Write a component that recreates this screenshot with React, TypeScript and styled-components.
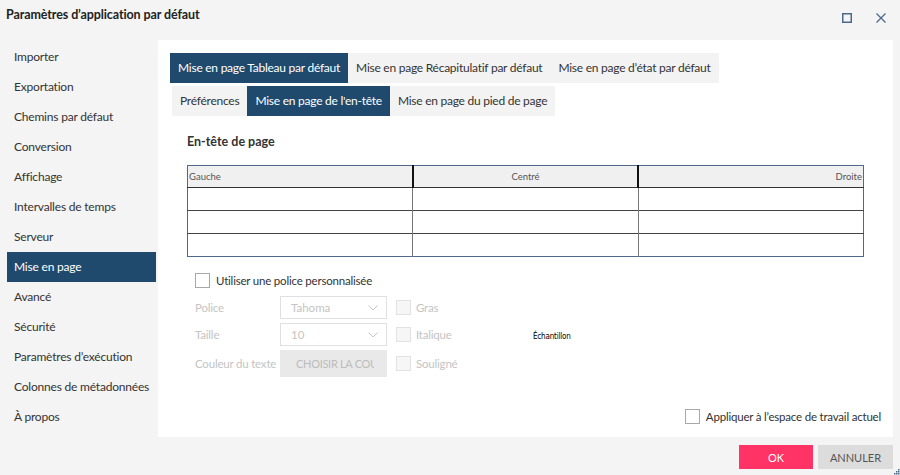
import { FC } from "react";
import styled, { createGlobalStyle } from "styled-components";

const GlobalStyle = createGlobalStyle`
    html, body {
        margin: 0;
        padding: 0;
        background: #f4f4f4;
    }
    body {
        font-family: Lato, "Open Sans", sans-serif;
        color: #333;
    }
    * {
        box-sizing: border-box;
    }
`;

const Dialog = styled.div`
    position: relative;
    width: 900px;
    height: 475px;
    background: #f4f4f4;
    display: flex;
    flex-direction: column;
    overflow: hidden;
`;

const TitleBar = styled.header`
    height: 40px;
    flex-shrink: 0;
    display: flex;
    align-items: flex-start;
    justify-content: space-between;
    padding: 6px 10px 0 6px;
`;

const Title = styled.h1`
    margin: 0;
    font-size: 12.5px;
    font-weight: 700;
    letter-spacing: -0.1px;
    line-height: 18px;
    color: #222;
`;

const WindowButtons = styled.div`
    display: flex;
    gap: 16px;
    padding-top: 3px;
`;

const WindowButton = styled.button`
    width: 18px;
    height: 18px;
    padding: 0;
    border: none;
    background: transparent;
    display: flex;
    align-items: center;
    justify-content: center;
`;

const Body = styled.div`
    flex: 1;
    min-height: 0;
    display: flex;
    padding-right: 7px;
`;

const Sidebar = styled.nav`
    width: 158px;
    flex-shrink: 0;
    padding: 2px 2px 0 7px;
    display: flex;
    flex-direction: column;
`;

const NavItem = styled.div<{ $active?: boolean }>`
    height: 30px;
    flex-shrink: 0;
    line-height: 30px;
    padding-left: 7px;
    font-size: 12px;
    letter-spacing: -0.2px;
    white-space: nowrap;
    color: ${(p) => (p.$active ? "#fff" : "#333")};
    background: ${(p) => (p.$active ? "#1f4a6e" : "transparent")};
`;

const Content = styled.main`
    flex: 1;
    background: #fff;
    padding: 13px 12px 13px 12px;
    display: flex;
    flex-direction: column;
`;

const TabRow = styled.div<{ $indent?: number }>`
    display: flex;
    margin-left: ${(p) => p.$indent ?? 0}px;
    & + & {
        margin-top: 3px;
    }
`;

const Tab = styled.div<{ $active?: boolean }>`
    height: 30px;
    line-height: 30px;
    padding: 0 8px;
    font-size: 12px;
    letter-spacing: -0.25px;
    white-space: nowrap;
    color: ${(p) => (p.$active ? "#fff" : "#333")};
    background: ${(p) => (p.$active ? "#1f4a6e" : "#f3f3f3")};
`;

const Section = styled.section`
    padding-left: 17px;
    margin-top: 17px;
`;

const SectionTitle = styled.h2`
    margin: 0;
    font-size: 12.5px;
    font-weight: 700;
    line-height: 18px;
    color: #333;
`;

const HeaderTable = styled.table`
    margin-top: 14px;
    width: 677px;
    border-collapse: collapse;
    table-layout: fixed;
    border: 1px solid #50698a;
`;

const HeadCell = styled.th<{ $align: "left" | "center" | "right" }>`
    height: 22px;
    padding: 0 1px;
    background: #f0f0f0;
    font-size: 9.5px;
    font-weight: 400;
    color: #555;
    text-align: ${(p) => p.$align};
    border-bottom: 1px solid #333;
    & + & {
        border-left: 2px solid #111;
    }
`;

const Cell = styled.td`
    height: 23px;
    padding: 0;
    border-top: 1px solid #444;
    & + & {
        border-left: 1px solid #777;
    }
`;

const CheckRow = styled.label`
    display: flex;
    align-items: center;
    gap: 6px;
    font-size: 11.5px;
    letter-spacing: -0.2px;
    color: #333;
`;

const Box = styled.span<{ $disabled?: boolean }>`
    width: 15px;
    height: 15px;
    flex-shrink: 0;
    border: 1px solid ${(p) => (p.$disabled ? "#e2e2e2" : "#a8a8a8")};
    background: ${(p) => (p.$disabled ? "#f6f6f6" : "#fff")};
`;

const CustomFont = styled.div`
    margin-top: 16px;
    padding-left: 8px;
`;

const FontGrid = styled.div`
    margin-top: 8px;
    display: grid;
    grid-template-columns: 85px 116px 20px 117px auto;
    grid-template-rows: 23px 23px 27px;
    row-gap: 4px;
    align-items: center;
`;

const FieldLabel = styled.span`
    font-size: 11.5px;
    letter-spacing: -0.2px;
    color: #c4c4c4;
    white-space: nowrap;
`;

const Select = styled.div`
    width: 107px;
    height: 100%;
    border: 1px solid #e0e0e0;
    display: flex;
    align-items: center;
    justify-content: space-between;
    padding: 0 8px 0 10px;
    font-size: 11.5px;
    color: #c4c4c4;
`;

const ColorButton = styled.button`
    width: 107px;
    height: 100%;
    border: none;
    background: #e9e9e9;
    padding: 0 13px 0 16px;
    font-family: inherit;
    font-size: 11px;
    letter-spacing: -0.3px;
    color: #bcbcbc;
    text-align: left;
`;

const Clip = styled.span`
    display: block;
    overflow: hidden;
    white-space: nowrap;
`;

const Sample = styled.span`
    grid-row: 1 / span 3;
    grid-column: 5;
    font-family: "DejaVu Sans Condensed", "DejaVu Sans", sans-serif;
    font-size: 8px;
    color: #000;
    letter-spacing: -0.2px;
`;

const ApplyRow = styled.div`
    margin-top: auto;
    align-self: flex-end;
`;

const Footer = styled.footer`
    height: 38px;
    flex-shrink: 0;
    display: flex;
    justify-content: flex-end;
    align-items: flex-start;
    gap: 5px;
    padding: 8px 7px 0 0;
`;

const FooterButton = styled.button<{ $primary?: boolean }>`
    width: ${(p) => (p.$primary ? 74 : 75)}px;
    height: 24px;
    border: none;
    font-family: inherit;
    font-size: 11px;
    color: ${(p) => (p.$primary ? "#fff" : "#555")};
    background: ${(p) => (p.$primary ? "#ff3366" : "#dcdcdc")};
`;

const Grip = styled.svg`
    position: absolute;
    right: 0;
    bottom: 0;
`;

const Chevron: FC = () => (
    <svg width="10" height="6" viewBox="0 0 10 6">
        <path d="M0.5 0.5 L5 5 L9.5 0.5" fill="none" stroke="#c8c8c8" strokeWidth="1" />
    </svg>
);

const navItems = [
    "Importer",
    "Exportation",
    "Chemins par défaut",
    "Conversion",
    "Affichage",
    "Intervalles de temps",
    "Serveur",
    "Mise en page",
    "Avancé",
    "Sécurité",
    "Paramètres d’exécution",
    "Colonnes de métadonnées",
    "À propos",
];

export default function App() {
    return (
        <Dialog>
            <GlobalStyle />
            <TitleBar>
                <Title>Paramètres d’application par défaut</Title>
                <WindowButtons>
                    <WindowButton aria-label="Agrandir">
                        <svg width="10" height="10" viewBox="0 0 10 10">
                            <rect x="0.75" y="0.75" width="8.5" height="8.5" fill="none" stroke="#4a6a8c" strokeWidth="1.5" />
                        </svg>
                    </WindowButton>
                    <WindowButton aria-label="Fermer">
                        <svg width="10" height="10" viewBox="0 0 10 10">
                            <path d="M0.5 0.5 L9.5 9.5 M9.5 0.5 L0.5 9.5" stroke="#4a6a8c" strokeWidth="1.3" />
                        </svg>
                    </WindowButton>
                </WindowButtons>
            </TitleBar>
            <Body>
                <Sidebar>
                    {navItems.map((item) => (
                        <NavItem key={item} $active={item === "Mise en page"}>
                            {item}
                        </NavItem>
                    ))}
                </Sidebar>
                <Content>
                    <TabRow>
                        <Tab $active>Mise en page Tableau par défaut</Tab>
                        <Tab>Mise en page Récapitulatif par défaut</Tab>
                        <Tab>Mise en page d’état par défaut</Tab>
                    </TabRow>
                    <TabRow $indent={2}>
                        <Tab>Préférences</Tab>
                        <Tab $active>Mise en page de l'en-tête</Tab>
                        <Tab>Mise en page du pied de page</Tab>
                    </TabRow>
                    <Section>
                        <SectionTitle>En-tête de page</SectionTitle>
                        <HeaderTable>
                            <thead>
                                <tr>
                                    <HeadCell $align="left">Gauche</HeadCell>
                                    <HeadCell $align="center">Centré</HeadCell>
                                    <HeadCell $align="right">Droite</HeadCell>
                                </tr>
                            </thead>
                            <tbody>
                                {[0, 1, 2].map((row) => (
                                    <tr key={row}>
                                        <Cell />
                                        <Cell />
                                        <Cell />
                                    </tr>
                                ))}
                            </tbody>
                        </HeaderTable>
                        <CustomFont>
                            <CheckRow>
                                <Box />
                                Utiliser une police personnalisée
                            </CheckRow>
                            <FontGrid>
                                <Sample>Échantillon</Sample>

                                <FieldLabel>Police</FieldLabel>
                                <Select>
                                    Tahoma
                                    <Chevron />
                                </Select>
                                <Box $disabled />
                                <FieldLabel>Gras</FieldLabel>

                                <FieldLabel>Taille</FieldLabel>
                                <Select>
                                    10
                                    <Chevron />
                                </Select>
                                <Box $disabled />
                                <FieldLabel>Italique</FieldLabel>

                                <FieldLabel>Couleur du texte</FieldLabel>
                                <ColorButton disabled>
                                    <Clip>CHOISIR LA COULEUR</Clip>
                                </ColorButton>
                                <Box $disabled />
                                <FieldLabel>Souligné</FieldLabel>
                            </FontGrid>
                        </CustomFont>
                    </Section>
                    <ApplyRow>
                        <CheckRow>
                            <Box />
                            Appliquer à l’espace de travail actuel
                        </CheckRow>
                    </ApplyRow>
                </Content>
            </Body>
            <Footer>
                <FooterButton $primary>OK</FooterButton>
                <FooterButton>ANNULER</FooterButton>
            </Footer>
            <Grip width="7" height="7" viewBox="0 0 7 7">
                <rect x="5" y="1" width="1.5" height="1.5" fill="#4a6a8c" />
                <rect x="3" y="3" width="1.5" height="1.5" fill="#4a6a8c" />
                <rect x="5" y="3" width="1.5" height="1.5" fill="#4a6a8c" />
                <rect x="1" y="5" width="1.5" height="1.5" fill="#4a6a8c" />
                <rect x="3" y="5" width="1.5" height="1.5" fill="#4a6a8c" />
                <rect x="5" y="5" width="1.5" height="1.5" fill="#4a6a8c" />
            </Grip>
        </Dialog>
    );
}
